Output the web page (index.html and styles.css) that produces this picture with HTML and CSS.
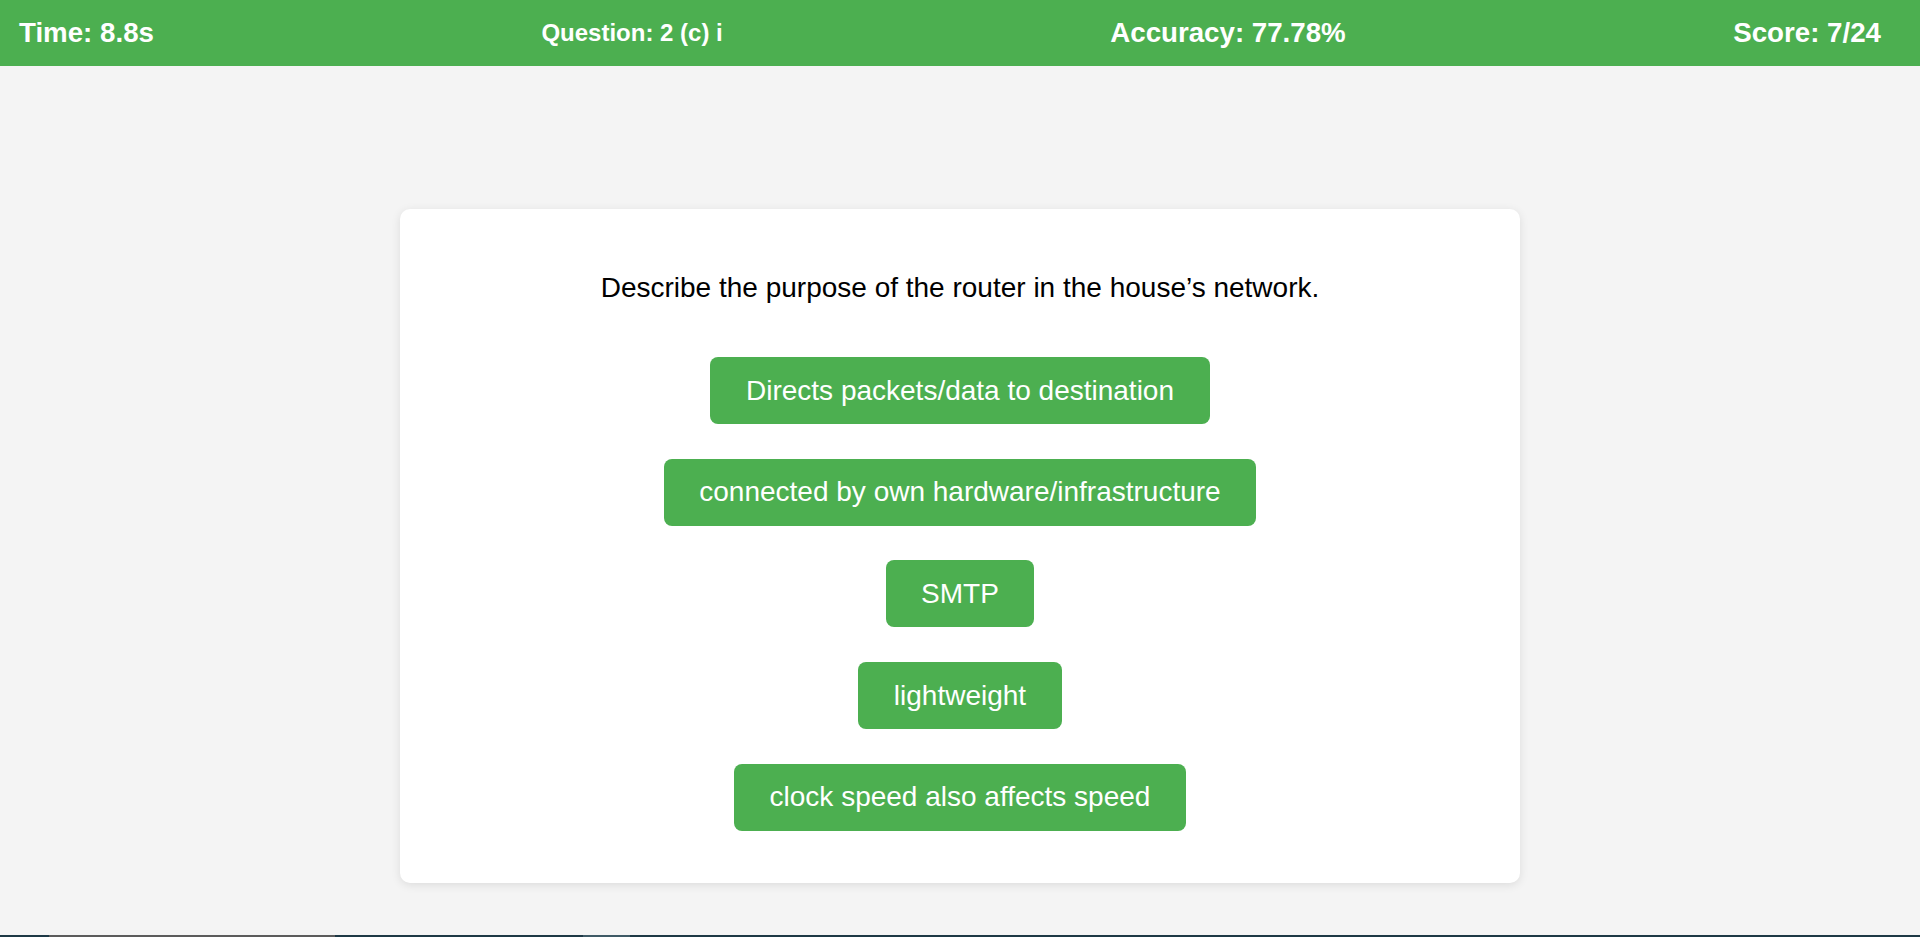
FILE: index.html
```html
<!DOCTYPE html>
<html lang="en">
<head>
<meta charset="utf-8">
<title>Quiz</title>
<link rel="stylesheet" href="styles.css">
</head>
<body>
<header class="topbar">
  <div class="stat stat-lg">Time: 8.8s</div>
  <div class="stat stat-sm">Question: 2 (c) i</div>
  <div class="stat stat-lg">Accuracy: 77.78%</div>
  <div class="stat stat-lg">Score: 7/24</div>
</header>
<main class="main">
  <section class="card">
    <p class="question">Describe the purpose of the router in the house’s network.</p>
    <div class="options">
      <button class="option">Directs packets/data to destination</button>
      <button class="option">connected by own hardware/infrastructure</button>
      <button class="option">SMTP</button>
      <button class="option">lightweight</button>
      <button class="option">clock speed also affects speed</button>
    </div>
  </section>
</main>
<div class="taskbar-edge">
  <span class="seg seg-a"></span>
  <span class="seg seg-b"></span>
</div>
</body>
</html>
```
FILE: styles.css
```css
html, body {
  margin: 0;
  padding: 0;
}
body {
  background: #f4f4f4;
  font-family: "Liberation Sans", Arial, sans-serif;
  height: 937px;
  display: flex;
  flex-direction: column;
  overflow: hidden;
}
.topbar {
  height: 66px;
  flex: 0 0 66px;
  background: #4caf50;
  color: #fff;
  display: flex;
  align-items: center;
  justify-content: space-between;
  padding: 0 39px 0 19px;
}
.stat {
  font-weight: bold;
}
.stat-lg {
  font-size: 27.7px;
}
.stat-sm {
  font-size: 24px;
}
.main {
  flex: 1;
  display: flex;
  flex-direction: column;
  align-items: center;
  padding-top: 143px;
}
.card {
  width: 1120px;
  box-sizing: border-box;
  background: #fff;
  border-radius: 10px;
  box-shadow: 0 2px 10px rgba(0, 0, 0, 0.1);
  padding: 35px;
  text-align: center;
}
.question {
  font-size: 28px;
  color: #000;
  margin: 28px 0 53px;
}
.options {
  display: flex;
  flex-direction: column;
  align-items: center;
  gap: 34.7px;
  padding-bottom: 17.5px;
}
.option {
  font-family: "Liberation Sans", Arial, sans-serif;
  font-size: 28px;
  color: #fff;
  background: #4caf50;
  border: none;
  border-radius: 8px;
  padding: 17.5px 35.5px;
  line-height: normal;
}
.taskbar-edge {
  height: 2px;
  flex: 0 0 2px;
  background: #1d3845;
  display: flex;
}
.seg {
  display: block;
  height: 2px;
}
.seg-a {
  margin-left: 49px;
  width: 286px;
  background: #5b5b5b;
}
.seg-b {
  margin-left: 248px;
  width: 47px;
  background: #3f5a66;
}
```
